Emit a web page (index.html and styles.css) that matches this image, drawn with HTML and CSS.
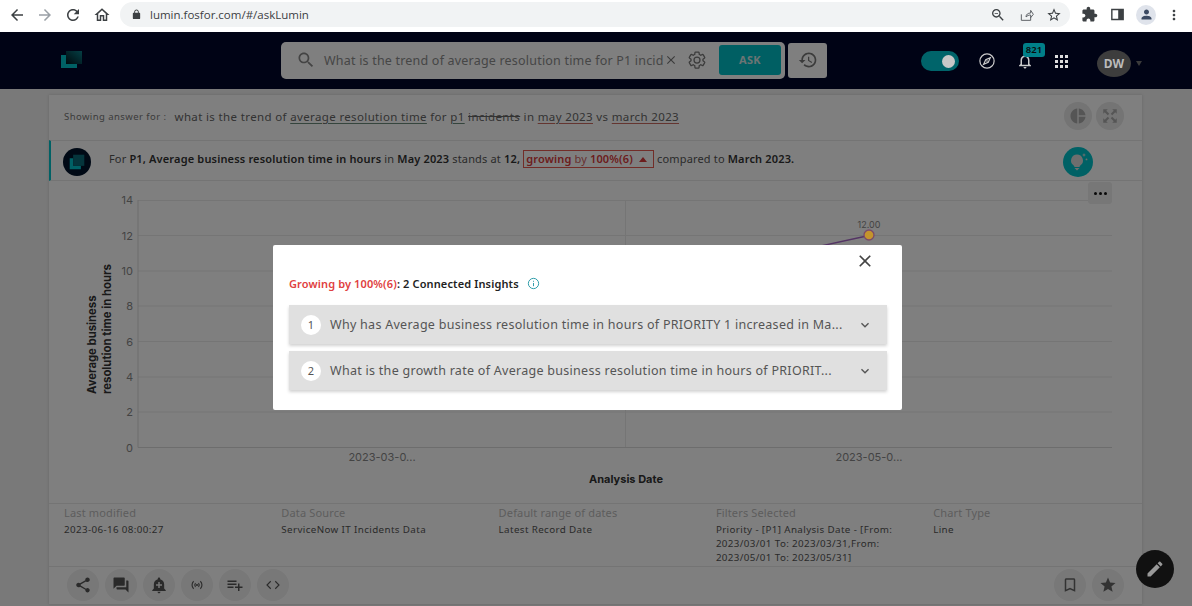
FILE: index.html
```
<!DOCTYPE html>
<html lang="en">
<head>
<meta charset="utf-8">
<title>Lumin</title>
<link rel="stylesheet" href="styles.css">
</head>
<body>
<div class="chrome">
  <svg class="ci nav" viewBox="0 0 24 24"><path d="M20 11H7.83l5.59-5.59L12 4l-8 8 8 8 1.41-1.41L7.83 13H20v-2z"/></svg>
  <svg class="ci nav dim" viewBox="0 0 24 24"><path d="M12 4l-1.41 1.41L16.17 11H4v2h12.17l-5.58 5.59L12 20l8-8z"/></svg>
  <svg class="ci nav" viewBox="0 0 24 24"><path d="M17.65 6.35C16.2 4.9 14.21 4 12 4c-4.42 0-7.99 3.58-7.99 8s3.57 8 7.99 8c3.73 0 6.84-2.55 7.73-6h-2.08c-.82 2.33-3.04 4-5.65 4-3.31 0-6-2.69-6-6s2.69-6 6-6c1.66 0 3.14.69 4.22 1.78L13 11h7V4l-2.35 2.35z"/></svg>
  <svg class="ci nav home" viewBox="0 0 24 24"><path d="M12 5.69l5 4.5V18h-2v-6H9v6H7v-7.81l5-4.5M12 3L2 12h3v8h6v-6h2v6h6v-8h3L12 3z"/></svg>
  <div class="omnibox">
    <svg class="lock" viewBox="0 0 24 24"><path d="M18 8h-1V6c0-2.76-2.24-5-5-5S7 3.24 7 6v2H6c-1.1 0-2 .9-2 2v10c0 1.1.9 2 2 2h12c1.1 0 2-.9 2-2V10c0-1.1-.9-2-2-2zM9 6c0-1.66 1.34-3 3-3s3 1.34 3 3v2H9V6z"/></svg>
    <span class="url">lumin.fosfor.com/#/askLumin</span>
    <span class="spacer"></span>
    <svg class="ci om" viewBox="0 0 24 24"><path d="M15.5 14h-.79l-.28-.27C15.41 12.59 16 11.11 16 9.5 16 5.91 13.09 3 9.5 3S3 5.91 3 9.5 5.91 16 9.5 16c1.61 0 3.09-.59 4.23-1.57l.27.28v.79l5 4.99L20.49 19l-4.99-5zm-6 0C7.01 14 5 11.99 5 9.5S7.01 5 9.5 5 14 7.01 14 9.5 11.99 14 9.5 14zM7 9h5v1H7z"/></svg>
    <svg class="ci om" viewBox="0 0 24 24"><path class="outline" d="M5 11v9h14v-5M12 15c0-4 3-6 7-6V5l4 6-4 5v-4c-3 0-5 1-7 3z"/></svg>
    <svg class="ci om" viewBox="0 0 24 24"><path d="M22 9.24l-7.19-.62L12 2 9.19 8.63 2 9.24l5.46 4.73L5.82 21 12 17.27 18.18 21l-1.63-7.03L22 9.24zM12 15.4l-3.76 2.27 1-4.28-3.32-2.88 4.38-.38L12 6.1l1.71 4.04 4.38.38-3.32 2.88 1 4.28L12 15.4z"/></svg>
  </div>
  <svg class="ci ext" viewBox="0 0 24 24"><path d="M20.5 11H19V7c0-1.1-.9-2-2-2h-4V3.5C13 2.12 11.88 1 10.5 1S8 2.12 8 3.5V5H4c-1.1 0-1.99.9-1.99 2v3.8H3.5c1.49 0 2.7 1.21 2.7 2.7s-1.21 2.7-2.7 2.7H2V20c0 1.1.9 2 2 2h3.8v-1.5c0-1.49 1.21-2.7 2.7-2.7 1.49 0 2.7 1.21 2.7 2.7V22H17c1.1 0 2-.9 2-2v-4h1.5c1.38 0 2.5-1.12 2.5-2.5S21.88 11 20.5 11z"/></svg>
  <svg class="ci ext" viewBox="0 0 24 24"><path fill-rule="evenodd" d="M3 4h18v16H3zM5 6v12h8V6z"/></svg>
  <div class="profile"><svg viewBox="0 0 24 24"><path d="M12 12c2.2 0 4-1.8 4-4s-1.8-4-4-4-4 1.8-4 4 1.8 4 4 4zm0 2c-2.7 0-8 1.3-8 4v2h16v-2c0-2.7-5.3-4-8-4z"/></svg></div>
  <svg class="ci kebab" viewBox="0 0 24 24"><path d="M12 8c1.1 0 2-.9 2-2s-.9-2-2-2-2 .9-2 2 .9 2 2 2zm0 2c-1.1 0-2 .9-2 2s.9 2 2 2 2-.9 2-2-.9-2-2-2zm0 6c-1.1 0-2 .9-2 2s.9 2 2 2 2-.9 2-2-.9-2-2-2z"/></svg>
</div>

<div class="app">
  <header class="topbar">
    <svg class="logo" viewBox="0 0 21 17"><defs><linearGradient id="lg" x1="0" y1="1" x2="1" y2="0"><stop offset="0" stop-color="#00141c"/><stop offset="1" stop-color="#0a7f8a"/></linearGradient></defs><path d="M0 4h5v9h11v4H0z" fill="#00c3cb"/><rect x="5" y="0" width="16" height="13" fill="url(#lg)"/></svg>
    <div class="searchbox">
      <svg class="si search" viewBox="0 0 24 24"><path d="M15.5 14h-.79l-.28-.27C15.41 12.59 16 11.11 16 9.5 16 5.91 13.09 3 9.5 3S3 5.91 3 9.5 5.91 16 9.5 16c1.61 0 3.09-.59 4.23-1.57l.27.28v.79l5 4.99L20.49 19l-4.99-5zm-6 0C7.01 14 5 11.99 5 9.5S7.01 5 9.5 5 14 7.01 14 9.5 11.99 14 9.5 14z"/></svg>
      <span class="squery">What is the trend of average resolution time for P1 incid</span>
      <svg class="si clear" viewBox="0 0 24 24"><path d="M19 6.41L17.59 5 12 10.59 6.41 5 5 6.41 10.59 12 5 17.59 6.41 19 12 13.41 17.59 19 19 17.59 13.41 12z"/></svg>
      <svg class="si gear" viewBox="0 0 24 24"><path class="outline" d="M19.14 12.94c.04-.3.06-.61.06-.94 0-.32-.02-.64-.07-.94l2.03-1.58c.18-.14.23-.41.12-.61l-1.92-3.32c-.12-.22-.37-.29-.59-.22l-2.39.96c-.5-.38-1.03-.7-1.62-.94l-.36-2.54c-.04-.24-.24-.41-.48-.41h-3.84c-.24 0-.43.17-.47.41l-.36 2.54c-.59.24-1.13.57-1.62.94l-2.39-.96c-.22-.08-.47 0-.59.22L2.74 8.87c-.12.21-.08.47.12.61l2.03 1.58c-.05.3-.09.63-.09.94s.02.64.07.94l-2.03 1.58c-.18.14-.23.41-.12.61l1.92 3.32c.12.22.37.29.59.22l2.39-.96c.5.38 1.03.7 1.62.94l.36 2.54c.05.24.24.41.48.41h3.84c.24 0 .44-.17.47-.41l.36-2.54c.59-.24 1.13-.56 1.62-.94l2.39.96c.22.08.47 0 .59-.22l1.92-3.32c.12-.22.07-.47-.12-.61l-2.01-1.58zM12 15.6c-1.98 0-3.6-1.62-3.6-3.6s1.62-3.6 3.6-3.6 3.6 1.62 3.6 3.6-1.62 3.6-3.6 3.6z"/></svg>
      <button class="ask">ASK</button>
    </div>
    <div class="histbtn"><svg viewBox="0 0 24 24"><path d="M13 3c-4.97 0-9 4.03-9 9H1l3.89 3.89.07.14L9 12H6c0-3.87 3.13-7 7-7s7 3.13 7 7-3.13 7-7 7c-1.93 0-3.68-.79-4.94-2.06l-1.42 1.42C8.27 19.99 10.51 21 13 21c4.97 0 9-4.03 9-9s-4.03-9-9-9zm-1 5v5l4.28 2.54.72-1.21-3.5-2.08V8H12z"/></svg></div>
    <div class="toggle lift"><span class="knob"></span></div>
    <svg class="compass lift" viewBox="0 0 24 24"><circle cx="12" cy="12" r="9.5"/><path d="M16.5 7.5l-2.8 6.2-6.2 2.8 2.8-6.2zM12 11v2"/></svg>
    <div class="bell lift">
      <svg viewBox="0 0 24 24"><path d="M12 22c1.1 0 2-.9 2-2h-4c0 1.1.9 2 2 2zm6-6v-5c0-3.07-1.63-5.64-4.5-6.32V4c0-.83-.67-1.5-1.5-1.5s-1.5.67-1.5 1.5v.68C7.64 5.36 6 7.92 6 11v5l-2 2v1h16v-1l-2-2zm-2 1H8v-6c0-2.48 1.51-4.5 4-4.5s4 2.02 4 4.5v6z"/></svg>
      <span class="badge">821</span>
    </div>
    <div class="apps lift"><i></i><i></i><i></i><i></i><i></i><i></i><i></i><i></i><i></i></div>
    <div class="avatar lift">DW</div>
    <span class="caret"></span>
  </header>

  <main class="card">
    <div class="qrow">
      <span class="qlabel">Showing answer for :</span>
      <span class="qtext">what is the trend of <u class="ok">average resolution time</u> for <u class="ok">p1</u> <s>incidents</s> in <u class="warn">may 2023</u> vs <u class="warn">march 2023</u></span>
      <span class="spacer"></span>
      <span class="roundbtn"><svg viewBox="0 0 24 24"><path d="M11 2v20c-5.07-.5-9-4.79-9-10s3.93-9.5 9-10zm2.03 0v8.99H22c-.47-4.74-4.24-8.52-8.97-8.99zm0 11.01V22c4.74-.47 8.5-4.25 8.97-8.99h-8.97z"/></svg></span>
      <span class="roundbtn"><svg viewBox="0 0 24 24"><path d="M3 3h6L7 5l4 4-2 2-4-4-2 2zM21 3v6l-2-2-4 4-2-2 4-4-2-2zM3 21v-6l2 2 4-4 2 2-4 4 2 2zM21 21h-6l2-2-4-4 2-2 4 4 2-2z"/></svg></span>
    </div>
    <div class="insight">
      <span class="ilogo"><svg viewBox="0 0 21 21"><path d="M2 6h4v9h9v4H2z" fill="#00c3cb"/><rect x="6" y="2" width="13" height="13" fill="#0a6a78"/></svg></span>
      <p class="itext">For <b>P1, Average business resolution time in hours</b> in <b>May 2023</b> stands at <b>12,</b> <span class="chip"><em>growing</em> by <em>100%(6)</em><span class="up"></span></span> compared to <b>March 2023.</b></p>
      <span class="spacer"></span>
      <span class="bulb"><svg viewBox="0 0 24 24"><path d="M11 4.500a6 6 0 0 1 3.800 10.600c-.8.7-1.200 1.200-1.300 1.900h-5c-.1-.7-.5-1.200-1.300-1.900A6 6 0 0 1 11 4.500zM8.500 18h5L11 20.500zM18 3l.6 1.400L20 5l-1.400.6L18 7l-.6-1.400L16 5l1.400-.6zM20.500 8.500a.9.9 0 1 1 0 1.800.9.9 0 0 1 0-1.800z"/></svg></span>
    </div>
    <div class="chart">
      <svg class="plot" viewBox="0 0 1093 323" role="img">
        <g class="grid">
          <path d="M89 20.500H1063M89 55.500H1063M89 91H1063M89 126H1063M89 161.500H1063M89 197H1063M89 232H1063"/>
          <path d="M576.500 20V267"/>
        </g>
        <path class="axis" d="M89 20V267.500H1063"/>
        <g class="ytick">
          <text x="84" y="24">14</text><text x="84" y="60">12</text><text x="84" y="95">10</text><text x="84" y="130">8</text><text x="84" y="166">6</text><text x="84" y="201">4</text><text x="84" y="236">2</text><text x="84" y="272">0</text>
        </g>
        <g class="ytitle" transform="rotate(-90)">
          <text x="-214" y="47">Average business</text>
          <text x="-214" y="62">resolution time in hours</text>
        </g>
        <text class="xtick" x="333" y="281">2023-03-0...</text>
        <text class="xtick" x="820" y="281">2023-05-0...</text>
        <text class="xtitle" x="577" y="303">Analysis Date</text>
        <path class="series" d="M333 161.500L820 55.500"/>
        <text class="dlabel" x="820" y="48">12.00</text>
      </svg>
      <svg class="marker" viewBox="0 0 14 14"><circle cx="7" cy="7" r="5"/></svg>
      <span class="more"><i></i><i></i><i></i></span>
    </div>
    <div class="meta">
      <div><h4>Last modified</h4><p>2023-06-16 08:00:27</p></div>
      <div><h4>Data Source</h4><p>ServiceNow IT Incidents Data</p></div>
      <div><h4>Default range of dates</h4><p>Latest Record Date</p></div>
      <div><h4>Filters Selected</h4><p>Priority - [P1] Analysis Date - [From: 2023/03/01 To: 2023/03/31,From: 2023/05/01 To: 2023/05/31]</p></div>
      <div><h4>Chart Type</h4><p>Line</p></div>
    </div>
    <div class="actions">
      <span class="act"><svg viewBox="0 0 24 24"><path d="M18 16.080c-.76 0-1.440.3-1.960.77L8.910 12.700c.05-.23.09-.46.09-.7s-.04-.47-.09-.7l7.050-4.110c.54.5 1.250.81 2.040.81 1.660 0 3-1.340 3-3s-1.340-3-3-3-3 1.340-3 3c0 .24.04.47.09.7L8.040 9.810C7.500 9.310 6.790 9 6 9c-1.660 0-3 1.340-3 3s1.340 3 3 3c.79 0 1.500-.31 2.040-.81l7.120 4.160c-.05.21-.08.43-.08.65 0 1.610 1.310 2.920 2.920 2.920 1.610 0 2.920-1.310 2.920-2.920s-1.310-2.920-2.920-2.920z"/></svg></span>
      <span class="act"><svg viewBox="0 0 24 24"><path d="M21 6h-2v9H6v2c0 .55.45 1 1 1h11l4 4V7c0-.55-.45-1-1-1zm-4 6V3c0-.55-.45-1-1-1H3c-.55 0-1 .45-1 1v14l4-4h10c.55 0 1-.45 1-1z"/></svg></span>
      <span class="act"><svg viewBox="0 0 24 24"><path d="M10.010 21.010c0 1.100.89 1.990 1.990 1.990s1.990-.89 1.990-1.990h-3.980zm8.870-4.190V11c0-3.250-2.250-5.970-5.280-6.690v-.72C13.600 2.710 12.890 2 12 2s-1.600.71-1.600 1.590v.72C7.370 5.030 5.120 7.750 5.120 11v5.820L3 18.940V20h18v-1.060l-2.120-2.120zM16 13.010h-3v3h-2v-3H8V11h3V8h2v3h3v2.010z"/></svg></span>
      <span class="act"><svg class="stroked" viewBox="0 0 24 24"><path d="M7.500 7a7 7 0 0 0 0 10M16.500 7a7 7 0 0 1 0 10M10 9.500a4 4 0 0 0 0 5M14 9.500a4 4 0 0 1 0 5"/><circle cx="12" cy="12" r=".7"/></svg></span>
      <span class="act"><svg viewBox="0 0 24 24"><path d="M14 10H2v2h12v-2zm0-4H2v2h12V6zm4 8v-4h-2v4h-4v2h4v4h2v-4h4v-2h-4zM2 16h8v-2H2v2z"/></svg></span>
      <span class="act"><svg class="stroked" viewBox="0 0 24 24"><path d="M9 7l-5 5 5 5M15 7l5 5-5 5"/></svg></span>
      <span class="spacer"></span>
      <span class="act end"><svg viewBox="0 0 24 24"><path d="M17 3H7c-1.100 0-2 .9-2 2v16l7-3 7 3V5c0-1.100-.9-2-2-2zm0 15l-5-2.180L7 18V5h10v13z"/></svg></span>
      <span class="act end"><svg viewBox="0 0 24 24"><path d="M12 17.270L18.180 21l-1.640-7.030L22 9.240l-7.190-.61L12 2 9.190 8.630 2 9.240l5.460 4.730L5.820 21z"/></svg></span>
    </div>
  </main>
  <button class="fab"><svg viewBox="0 0 24 24"><path d="M3 17.250V21h3.750L17.810 9.940l-3.750-3.750L3 17.250zM20.710 7.040c.39-.39.39-1.020 0-1.410l-2.340-2.340c-.39-.39-1.020-.39-1.410 0l-1.830 1.830 3.750 3.750 1.830-1.830z"/></svg></button>

  <div class="overlay">
    <section class="modal">
      <svg class="close" viewBox="0 0 24 24"><path d="M19 6.410L17.590 5 12 10.590 6.410 5 5 6.410 10.590 12 5 17.590 6.410 19 12 13.410 17.590 19 19 17.590 13.410 12z"/></svg>
      <h3 class="mtitle"><span><span class="red">Growing by 100%(6)</span>: 2 Connected Insights</span>
        <svg class="info" viewBox="0 0 24 24"><circle cx="12" cy="12" r="9.500"/><path d="M12 11v6M12 7v1.800"/></svg>
      </h3>
      <div class="acc"><span class="num">1</span><span class="atext">Why has Average business resolution time in hours of PRIORITY 1 increased in Ma...</span><svg class="chev" viewBox="0 0 24 24"><path d="M16.590 8.590L12 13.170 7.410 8.590 6 10l6 6 6-6z"/></svg></div>
      <div class="acc"><span class="num">2</span><span class="atext">What is the growth rate of Average business resolution time in hours of PRIORIT...</span><svg class="chev" viewBox="0 0 24 24"><path d="M16.590 8.590L12 13.170 7.410 8.590 6 10l6 6 6-6z"/></svg></div>
    </section>
  </div>
</div>
</body>
</html>
```
FILE: styles.css
```
* { box-sizing: border-box; }
html, body { margin: 0; padding: 0; height: 606px; overflow: hidden; background: #fff; }
body { font-family: "Noto Sans", sans-serif; color: #333; }
svg { display: block; flex: none; }
.spacer { flex: 1; }
.lift { position: relative; z-index: 3; }

/* browser chrome */
.chrome { height: 32px; display: flex; align-items: center; background: #fff; padding-bottom: 3px; }
.ci { fill: #3c4043; }
.nav { width: 18px; height: 18px; margin-left: 10px; }
.nav:first-child { margin-left: 8px; }
.home { margin-left: 11px; }
.dim { fill: #9aa0a6; }
.omnibox { margin-left: 9px; width: 950px; height: 25px; border-radius: 13px; background: #f1f3f4; display: flex; align-items: center; padding: 0 8px 0 11px; }
.lock { width: 11px; height: 11px; fill: #3c4043; }
.url { font: 11.500px "Open Sans", sans-serif; color: #3c4043; margin-left: 8px; }
.om { width: 16px; height: 16px; margin-left: 12px; }
.outline { fill: none; stroke: currentColor; stroke-width: 1.500; }
.om .outline { stroke: #5f6368; }
.ext { width: 17px; height: 17px; margin-left: 11px; }
.profile { width: 20px; height: 20px; margin-left: 10px; border-radius: 50%; background: #dfe3eb; display: flex; align-items: center; justify-content: center; }
.profile svg { width: 15px; height: 15px; fill: #3c4a63; }
.kebab { width: 16px; height: 16px; margin-left: 10px; }

/* app */
.app { position: relative; height: 574px; background: #f2f2f2; }
.topbar { height: 57px; background: #00062a; display: flex; align-items: center; position: relative; }
.logo { width: 21px; height: 17px; margin-left: 61px; margin-top: -3px; }
.searchbox { margin-left: 199px; width: 504px; height: 37px; border-radius: 5px; background: #fff; display: flex; align-items: center; padding: 0 4px 0 15px; margin-top: -1px; }
.si { fill: #888; }
.search { width: 20px; height: 20px; }
.squery { margin-left: 8px; width: 340px; font-size: 12.500px; letter-spacing: .2px; color: #8c8c8c; white-space: nowrap; }
.clear { width: 14px; height: 14px; fill: #777; }
.gear { width: 20px; height: 20px; margin-left: 9px; color: #777; }
.ask { margin-left: 12px; width: 62px; height: 30px; border: 0; border-radius: 3px; background: #00bfc6; color: #d8e8e8; font: 700 11px "Noto Sans", sans-serif; letter-spacing: .3px; padding: 0 0 1px; }
.histbtn { margin-left: 3px; width: 39px; height: 35px; background: #fff; border-radius: 3px; display: flex; align-items: center; justify-content: center; margin-top: -1px; }
.histbtn svg { width: 20px; height: 20px; fill: #777; }
.toggle { margin-left: 94px; width: 38px; height: 20px; border-radius: 10px; background: #00646a; display: flex; align-items: center; justify-content: flex-end; padding-right: 4px; margin-top: 1px; }
.knob { width: 13px; height: 13px; border-radius: 50%; background: #c8c8c8; }
.compass { width: 18px; height: 18px; margin-left: 19px; fill: none; stroke: #ccc; stroke-width: 1.600; margin-top: 1px; }
.bell { margin-left: 20px; width: 18px; height: 20px; margin-top: 1px; }
.bell svg { width: 18px; height: 20px; fill: #ccc; }
.badge { position: absolute; left: 7px; top: -8px; width: 22px; height: 14px; border-radius: 3px; background: #007f88; color: #0a0a0a; font: 600 9.500px/14px "Noto Sans", sans-serif; text-align: center; }
.apps { margin-left: 21px; display: grid; grid-template-columns: repeat(3, 3px); gap: 2px; margin-top: 1px; }
.apps i { width: 3px; height: 3px; background: #ddd; }
.avatar { margin-left: 29px; width: 34px; height: 27px; border-radius: 50%; background: #3d3d3d; color: #bbb; font: 700 12px/27px "Noto Sans", sans-serif; text-align: center; margin-top: 6px; }
.caret { margin-left: 5px; width: 0; height: 0; border: 3.500px solid transparent; border-top: 5px solid #777; border-bottom: 0; margin-top: 6px; }

/* card */
.card { margin: 6px 50px 0 49px; height: 509px; background: #fff; display: flex; flex-direction: column; box-shadow: 0 0 3px rgba(0,0,0,.15); }
.qrow { height: 45px; display: flex; align-items: center; padding: 0 18px 3px 15px; flex: none; }
.qlabel { font-size: 9.500px; letter-spacing: .44px; color: #777; }
.qtext { margin-left: 8px; font-size: 11.500px; letter-spacing: .36px; color: #666; white-space: nowrap; }
.qtext u { text-underline-offset: 2px; }
.ok { text-decoration-color: #6a8a7a; }
.warn { text-decoration-color: #c86a60; }
.roundbtn { width: 28px; height: 28px; border-radius: 50%; background: #e8e8e8; display: flex; align-items: center; justify-content: center; margin-left: 4px; }
.roundbtn svg { width: 18px; height: 18px; fill: #aaa; }
.insight { height: 41px; flex: none; display: flex; align-items: center; border-top: 1px solid #e8e8e8; border-bottom: 1px solid #e8e8e8; border-left: 2px solid #00c3cb; padding: 2px 49px 0 12px; }
.ilogo { width: 28px; height: 28px; border-radius: 50%; background: #00122a; display: flex; align-items: center; justify-content: center; }
.ilogo svg { width: 18px; height: 18px; }
.itext { margin: 0 0 5px 18px; font-size: 11px; color: #555; letter-spacing: .16px; white-space: nowrap; }
.itext b { color: #333; font-weight: 600; }
.chip { display: inline-block; border: 1px solid #e45a50; color: #d06060; height: 18px; line-height: 15px; padding: 0 6px 0 2px; }
.chip em { font-style: normal; font-weight: 600; color: #d83a3a; }
.up { display: inline-block; margin-left: 6px; border: 4px solid transparent; border-bottom: 5px solid #d83a3a; border-top: 0; vertical-align: 1px; }
.bulb { width: 30px; height: 30px; border-radius: 50%; background: #00c3cb; display: flex; align-items: center; justify-content: center; margin-top: 1px; }
.bulb svg { width: 24px; height: 24px; fill: #ddd; }

.chart { position: relative; height: 322px; flex: none; }
.plot { width: 1093px; height: 323px; margin-top: -1px; font-family: Inter, sans-serif; }
.grid path { fill: none; stroke: #eaeaea; stroke-width: 1; }
.axis { fill: none; stroke: #dadada; stroke-width: 1; }
.ytick text { font-size: 11px; fill: #888; text-anchor: end; }
.ytitle text { font-size: 11.300px; font-weight: 700; fill: #333; text-anchor: start; }
.xtick { font-size: 11px; fill: #888; text-anchor: middle; }
.xtitle { font-size: 11px; font-weight: 700; fill: #333; text-anchor: middle; }
.series { fill: none; stroke: #a868c8; stroke-width: 1.300; }
.dlabel { font-size: 9px; fill: #888; text-anchor: middle; }
.marker { position: absolute; left: 813px; top: 47px; width: 14px; height: 14px; z-index: 3; }
.marker circle { fill: #c4942c; stroke: #7a4a6a; stroke-width: 1.300; }
.more { position: absolute; right: 30px; top: 1px; width: 24px; height: 22px; border-radius: 3px; background: #eee; display: flex; align-items: center; justify-content: center; gap: 2px; }
.more i { width: 3px; height: 3px; border-radius: 50%; background: #111; }

.meta { flex: none; height: 64px; display: grid; grid-template-columns: repeat(5, 217.300px); padding-left: 15px; border-top: 1px solid #e8e8e8; border-bottom: 1px solid #e8e8e8; padding-top: 2px; }
.meta h4 { margin: 0; font-size: 11px; line-height: 14px; font-weight: 400; color: #bbb; letter-spacing: .15px; }
.meta p { margin: 3px 0 0; font-size: 9.800px; line-height: 14px; color: #555; letter-spacing: .38px; width: 190px; }
.actions { flex: 1; display: flex; align-items: center; padding: 0 18px 2px 18px; gap: 6px; }
.act { width: 32px; height: 32px; border-radius: 50%; background: #f0f0f0; display: flex; align-items: center; justify-content: center; }
.act svg { width: 18px; height: 18px; fill: #555; }
.act .stroked { fill: none; stroke: #555; stroke-width: 1.500; }
.act.end svg { fill: #666; }
.fab { position: absolute; left: 1136px; top: 518px; width: 38px; height: 38px; padding: 0; border: 0; border-radius: 50%; background: #111; display: flex; align-items: center; justify-content: center; z-index: 3; }
.fab svg { width: 20px; height: 20px; fill: #999; }

/* modal */
.overlay { position: absolute; inset: 0; background: rgba(0,0,0,.5); padding: 213px 0 0 273px; z-index: 2; }
.modal { position: relative; width: 629px; height: 165px; background: #fff; border-radius: 2px; padding: 30px 15px 0 16px; }
.close { position: absolute; right: 27px; top: 6px; width: 20px; height: 20px; fill: #444; }
.mtitle { margin: 0 0 14px; height: 16px; display: flex; align-items: center; font-size: 11px; font-weight: 600; color: #222; letter-spacing: .13px; }
.red { color: #e04040; }
.info { width: 13px; height: 13px; margin-left: 8px; fill: none; stroke: #2a9aa8; stroke-width: 1.800; }
.acc { height: 39px; background: #e0e0e0; display: flex; align-items: center; padding: 0 14px 0 12px; margin-bottom: 7px; box-shadow: 0 2px 3px rgba(0,0,0,.18); }
.num { width: 20px; height: 20px; border-radius: 50%; background: #fff; font-size: 11px; line-height: 20px; text-align: center; color: #555; flex: none; }
.atext { margin: 0 0 1px 9px; font-size: 12.500px; color: #555; letter-spacing: .28px; white-space: nowrap; flex: 1; }
.chev { width: 16px; height: 16px; fill: #555; }
```
